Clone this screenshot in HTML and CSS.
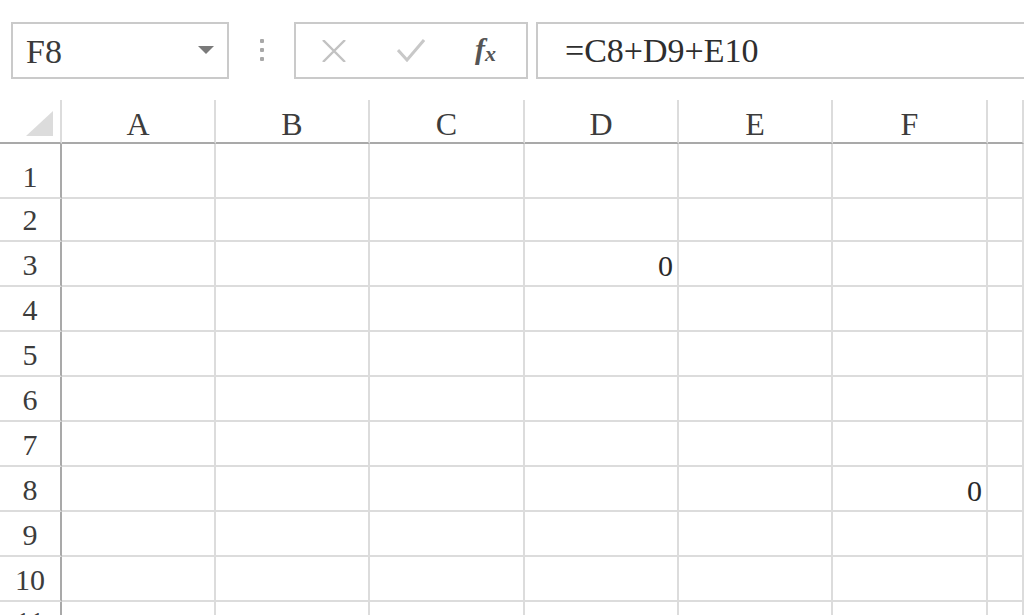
FILE: index.html
```html
<!DOCTYPE html>
<html lang="en">
<head>
<meta charset="utf-8">
<title>Sheet</title>
<link rel="stylesheet" href="styles.css">
</head>
<body>
<div class="app">
  <div class="toolbar">
    <div class="namebox"><span class="name">F8</span><span class="caret"></span></div>
    <div class="grip"><span></span><span></span><span></span></div>
    <div class="buttons">
      <svg class="btn-x" width="24" height="22" viewBox="0 0 24 22"><path d="M1 0 L23 22 M23 0 L1 22" stroke="#c2c2c2" stroke-width="2.4" fill="none"/></svg>
      <svg class="btn-ok" width="28" height="23" viewBox="0 0 28 23"><path d="M1 11 L10 21 L27 1" stroke="#c8c8c8" stroke-width="3" fill="none"/></svg>
      <span class="fx"><span class="f">f</span><span class="x">x</span></span>
    </div>
    <div class="formula">=C8+D9+E10</div>
  </div>
  <div class="sheet">
    <div class="cell corner"><svg width="27" height="25" viewBox="0 0 27 25"><polygon points="27,0 27,25 0,25" fill="#dcdcdc"/></svg></div>
    <div class="cell ch">A</div><div class="cell ch">B</div><div class="cell ch">C</div><div class="cell ch">D</div><div class="cell ch">E</div><div class="cell ch">F</div><div class="cell ch"></div>

    <div class="cell rh">1</div><div class="cell"></div><div class="cell"></div><div class="cell"></div><div class="cell"></div><div class="cell"></div><div class="cell"></div><div class="cell"></div>
    <div class="cell rh">2</div><div class="cell"></div><div class="cell"></div><div class="cell"></div><div class="cell"></div><div class="cell"></div><div class="cell"></div><div class="cell"></div>
    <div class="cell rh">3</div><div class="cell"></div><div class="cell"></div><div class="cell"></div><div class="cell num">0</div><div class="cell"></div><div class="cell"></div><div class="cell"></div>
    <div class="cell rh">4</div><div class="cell"></div><div class="cell"></div><div class="cell"></div><div class="cell"></div><div class="cell"></div><div class="cell"></div><div class="cell"></div>
    <div class="cell rh">5</div><div class="cell"></div><div class="cell"></div><div class="cell"></div><div class="cell"></div><div class="cell"></div><div class="cell"></div><div class="cell"></div>
    <div class="cell rh">6</div><div class="cell"></div><div class="cell"></div><div class="cell"></div><div class="cell"></div><div class="cell"></div><div class="cell"></div><div class="cell"></div>
    <div class="cell rh">7</div><div class="cell"></div><div class="cell"></div><div class="cell"></div><div class="cell"></div><div class="cell"></div><div class="cell"></div><div class="cell"></div>
    <div class="cell rh">8</div><div class="cell"></div><div class="cell"></div><div class="cell"></div><div class="cell"></div><div class="cell"></div><div class="cell num">0</div><div class="cell"></div>
    <div class="cell rh">9</div><div class="cell"></div><div class="cell"></div><div class="cell"></div><div class="cell"></div><div class="cell"></div><div class="cell"></div><div class="cell"></div>
    <div class="cell rh">10</div><div class="cell"></div><div class="cell"></div><div class="cell"></div><div class="cell"></div><div class="cell"></div><div class="cell"></div><div class="cell"></div>
    <div class="cell rh last">11</div><div class="cell"></div><div class="cell"></div><div class="cell"></div><div class="cell"></div><div class="cell"></div><div class="cell"></div><div class="cell"></div>
  </div>
</div>
</body>
</html>
```

FILE: styles.css
```css
html, body {
  margin: 0;
  padding: 0;
  background: #ffffff;
}
body {
  width: 1024px;
  height: 615px;
  overflow: hidden;
  font-family: "Liberation Serif", serif;
  color: #333333;
}
.app {
  display: flex;
  flex-direction: column;
}
.toolbar {
  display: flex;
  align-items: stretch;
  padding: 22px 0 0 11px;
  height: 57px;
}
.namebox {
  box-sizing: border-box;
  width: 218px;
  height: 57px;
  border: 2px solid #cacaca;
  display: flex;
  align-items: center;
  justify-content: space-between;
  padding: 0 13px 0 13px;
}
.name {
  font-size: 34px;
  line-height: 34px;
  color: #3a3a3a;
  margin-top: 2px;
}
.caret {
  width: 0;
  height: 0;
  border-left: 8px solid transparent;
  border-right: 8px solid transparent;
  border-top: 8px solid #7a7a7a;
  margin-top: -2px;
}
.grip {
  width: 65px;
  display: flex;
  flex-direction: column;
  align-items: center;
  justify-content: center;
  gap: 5px;
  padding-bottom: 2px;
}
.grip span {
  width: 4px;
  height: 4px;
  background: #a8a8a8;
  border-radius: 1px;
}
.buttons {
  box-sizing: border-box;
  width: 234px;
  height: 57px;
  border: 2px solid #cacaca;
  display: flex;
  align-items: center;
  padding-left: 26px;
}
.btn-ok {
  margin-left: 51px;
}
.fx {
  margin-left: 50px;
  display: flex;
  align-items: baseline;
  font-style: italic;
  font-weight: bold;
  color: #555555;
  margin-top: -4px;
}
.fx .f {
  font-size: 30px;
  line-height: 30px;
}
.fx .x {
  font-size: 22px;
  line-height: 22px;
  margin-left: 0px;
  position: relative;
  top: 2px;
}
.formula {
  box-sizing: border-box;
  flex: 1;
  height: 57px;
  margin-left: 8px;
  margin-right: -20px;
  border: 2px solid #cacaca;
  display: flex;
  align-items: center;
  padding-left: 27px;
  font-size: 34px;
  line-height: 34px;
  color: #2e2e2e;
}
.sheet {
  margin-top: 21px;
  display: grid;
  grid-template-columns: 62px 154px 154px 155px 154px 154px 155px 1fr;
  grid-template-rows: 44px 55px 43px repeat(8, 45px) 40px;
}
.cell {
  box-sizing: border-box;
  border-right: 2px solid #dcdcdc;
  border-bottom: 2px solid #dcdcdc;
  display: flex;
  align-items: flex-end;
  font-size: 30px;
  line-height: 30px;
  padding-bottom: 5px;
  color: #333333;
}
.corner {
  border-bottom-color: #a9a9a9;
  justify-content: flex-end;
  padding: 0 7px 6px 0;
}
.corner svg {
  display: block;
}
.ch {
  justify-content: center;
  border-bottom-color: #a9a9a9;
  padding-bottom: 3px;
  font-size: 32px;
  color: #3c3c3c;
}
.rh {
  justify-content: center;
  border-right-color: #a9a9a9;
  color: #3c3c3c;
}
.rh.last {
  align-items: flex-start;
  padding-top: 5px;
}
.num {
  justify-content: flex-end;
  padding-right: 4px;
  padding-bottom: 4px;
  color: #2a2a2a;
}
```
